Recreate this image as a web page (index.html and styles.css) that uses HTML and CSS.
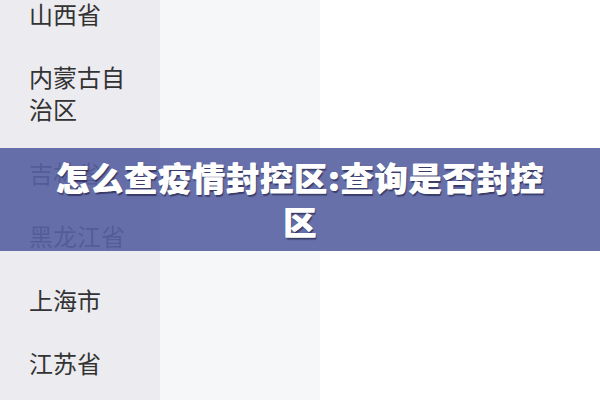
FILE: index.html
```html
<!DOCTYPE html>
<html lang="zh-CN">
<head>
<meta charset="utf-8">
<title>怎么查疫情封控区</title>
<link rel="stylesheet" href="styles.css">
</head>
<body>
<div class="page">
  <ul class="regions">
    <li class="region">山西省</li>
    <li class="region">内蒙古自治区</li>
    <li class="region">吉林省</li>
    <li class="region">黑龙江省</li>
    <li class="region">上海市</li>
    <li class="region">江苏省</li>
  </ul>
  <div class="cities"></div>
  <div class="detail"></div>
  <div class="banner">
    <h1 class="banner-title">怎么查疫情封控区:查询是否封控区</h1>
  </div>
</div>
</body>
</html>
```

FILE: styles.css
```css
* {
  box-sizing: border-box;
}

html, body {
  margin: 0;
  padding: 0;
  width: 600px;
  height: 400px;
  overflow: hidden;
  background: #ffffff;
  font-family: "Noto Sans CJK SC", "Noto Sans", sans-serif;
}

.page {
  position: relative;
  display: flex;
  align-items: flex-start;
  width: 600px;
  height: 400px;
  overflow: hidden;
}

/* province column */
.regions {
  list-style: none;
  margin: -18px 0 0;
  padding: 0;
  width: 160px;
  height: 430px;
  flex: none;
  background: #ebebf0;
}

.region {
  padding: 15.75px 30px 15.75px 29px;
  font-size: 24px;
  line-height: 32px;
  color: #333333;
}

/* city column */
.cities {
  width: 160px;
  height: 400px;
  flex: none;
  background: #f6f7f8;
}

.detail {
  flex: 1;
  height: 400px;
  background: #ffffff;
}

/* title banner laid over the lists */
.banner {
  position: absolute;
  left: 0;
  right: 0;
  top: 148px;
  height: 103px;
  padding: 7px 48px 9px 48px;
  background: rgba(88, 97, 161, 0.9);
}

.banner-title {
  margin: 0;
  text-align: center;
  font-size: 33px;
  line-height: 44px;
  letter-spacing: 1px;
  font-weight: 900;
  color: #ffffff;
  text-shadow: 0.8px 0 0 #ffffff, 1.5px 1.5px 1px rgba(25, 25, 60, 0.6);
}
```
